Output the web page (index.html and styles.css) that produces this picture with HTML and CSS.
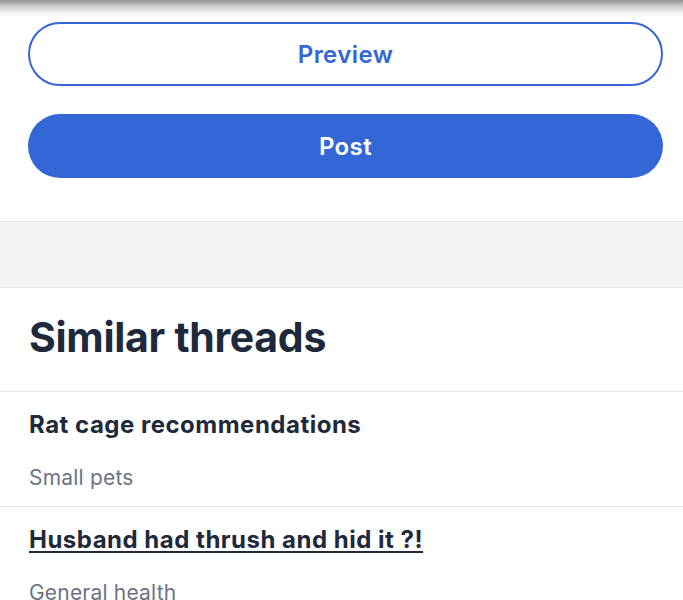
FILE: index.html
```html
<!DOCTYPE html>
<html>
<head>
<meta charset="utf-8">
<link rel="stylesheet" href="styles.css">
</head>
<body>
<div class="topshade"></div>
<section class="actions">
  <button class="btn btn-outline">Preview</button>
  <button class="btn btn-solid">Post</button>
</section>
<div class="band"></div>
<section class="similar">
  <h2 class="similar-title">Similar threads</h2>
  <ul class="threads">
    <li class="thread">
      <a class="thread-title">Rat cage recommendations</a>
      <span class="thread-topic">Small pets</span>
    </li>
    <li class="thread">
      <a class="thread-title underlined">Husband had thrush and hid it ?!</a>
      <span class="thread-topic">General health</span>
    </li>
  </ul>
</section>
</body>
</html>
```
FILE: styles.css
```css
* { box-sizing: border-box; }
html, body { margin: 0; padding: 0; background: #fff; }
body {
  font-family: Inter, "Noto Sans", "Liberation Sans", sans-serif;
  color: #1e293b;
  width: 683px;
  overflow: hidden;
}
.topshade {
  height: 16px;
  background: linear-gradient(to bottom, #8f8f8f 0%, #c8c8c8 35%, #efefef 75%, #ffffff 100%);
}
.actions {
  display: flex;
  flex-direction: column;
  gap: 28px;
  padding: 6px 20px 43px 28px;
  border-bottom: 1px solid #e5e6ea;
}
.btn {
  height: 64px;
  border-radius: 32px;
  font-family: inherit;
  font-size: 24px;
  font-weight: 600;
  letter-spacing: 0.4px;
  cursor: pointer;
}
.btn-outline {
  background: #fff;
  border: 2px solid #3467d6;
  color: #3467d6;
}
.btn-solid {
  background: #3467d6;
  border: none;
  color: #fff;
}
.band {
  height: 66px;
  background: #f2f3f5;
  border-bottom: 1px solid #e5e6ea;
}
.similar-title {
  margin: 0;
  padding: 24px 29px 29px;
  font-size: 41px;
  line-height: 50px;
  font-weight: 700;
  letter-spacing: -0.3px;
  border-bottom: 1px solid #e5e6ea;
}
.threads { list-style: none; margin: 0; padding: 0; }
.thread {
  display: flex;
  flex-direction: column;
  gap: 25px;
  padding: 18px 29px 15px;
  border-bottom: 1px solid #e5e6ea;
}
.thread-title {
  font-size: 24px;
  font-weight: 700;
  letter-spacing: 0.5px;
  color: #1e293b;
  line-height: 30px;
}
.underlined { text-decoration: underline; text-underline-offset: 3px; text-decoration-thickness: 2px; }
.thread-topic {
  font-size: 21px;
  letter-spacing: 0.2px;
  color: #6b7385;
  line-height: 26px;
}
```
